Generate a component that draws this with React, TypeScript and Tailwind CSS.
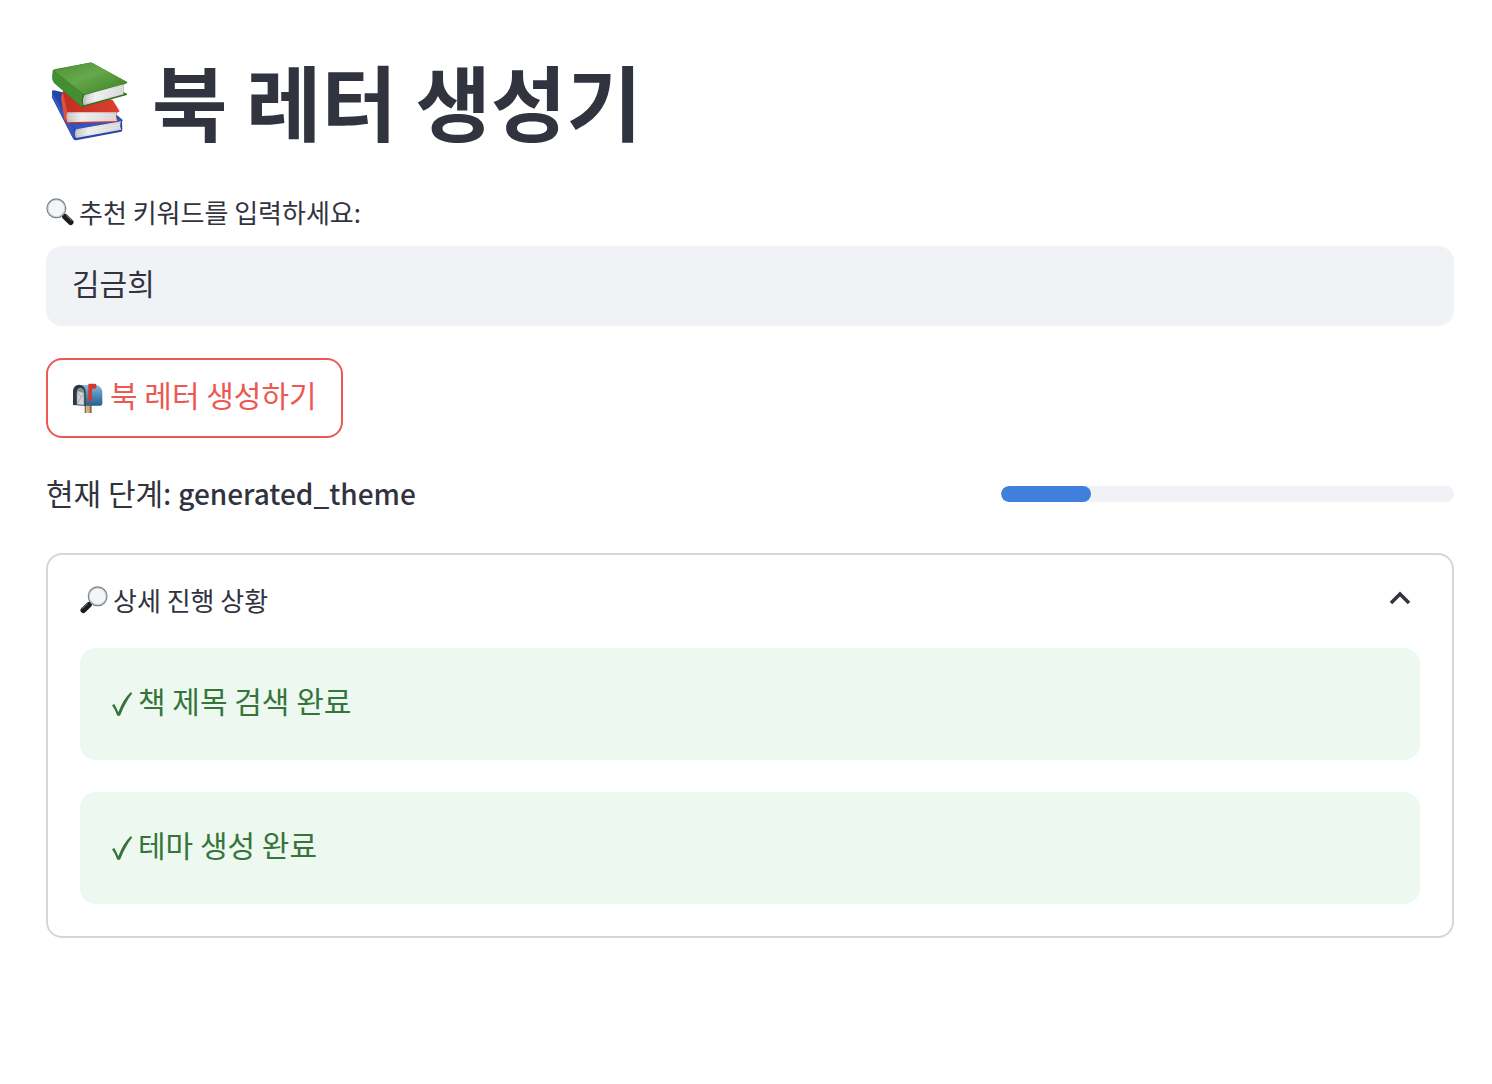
import React, { useState } from 'react'

interface IconProps {
  className?: string
}

interface StepProps {
  message: string
}

const STEPS = ['책 제목 검색 완료', '테마 생성 완료']

const BooksIcon = ({ className }: IconProps) => (
  <svg viewBox="18 18 264 264" className={className} aria-hidden="true">
    <defs>
      <linearGradient id="green" x1="0" y1="0" x2="1" y2="1">
        <stop offset="0" stopColor="#4f8f35" />
        <stop offset="0.45" stopColor="#66a84c" />
        <stop offset="1" stopColor="#37801f" />
      </linearGradient>
      <linearGradient id="red" x1="0" y1="0" x2="1" y2="0">
        <stop offset="0" stopColor="#c02e22" />
        <stop offset="1" stopColor="#dc4030" />
      </linearGradient>
      <linearGradient id="pages" x1="0" y1="0" x2="1" y2="0">
        <stop offset="0" stopColor="#bdbdbd" />
        <stop offset="0.3" stopColor="#ececec" />
        <stop offset="1" stopColor="#d3d3d3" />
      </linearGradient>
    </defs>
    <path d="M36 124 Q35 121 42 121 L68 127 L220 186 L248 210 L246 216 L247 240 L244 245 L108 271 Q101 271 98 263 L36 142 Z" fill="#2545a8" />
    <path d="M37 128 L100 235 L104 266 L98 263 L36 142 Z" fill="#3558bd" />
    <path d="M94 223 L236 203 L247 211 L106 238 Z" fill="#3355c0" />
    <path d="M108 238 L243 214 Q238 228 244 239 L108 264 Q101 252 108 238 Z" fill="url(#pages)" />
    <path d="M70 120 L82 118 L218 150 L239 184 L231 188 Q227 202 231 211 L236 216 L84 221 Q75 220 74 211 L65 150 Z" fill="url(#red)" />
    <path d="M68 124 L82 186 L76 214 L74 211 L63 145 Z" fill="#e0503e" />
    <path d="M82 187 L230 187 Q226 202 231 213 L82 217 Q76 200 82 187 Z" fill="url(#pages)" />
    <path d="M38 62 Q38 60 44 58 L148 38 Q153 37 157 39 L261 96 Q263 98 260 100 L250 104 L250 126 L261 131 Q262 134 258 136 L132 170 Q126 171 122 168 L42 98 Q37 92 37 84 Z" fill="#2d7421" />
    <path d="M40 61 L148 38 Q153 37 157 39 L261 96 Q262 98 259 100 L135 132 Q131 133 127 130 Z" fill="url(#green)" />
    <path d="M40 61 L128 131 Q123 148 127 169 L122 168 L42 98 Q37 92 37 80 Z" fill="#428e31" />
    <path d="M133 135 L250 103 Q248 118 251 133 L131 166 Q126 150 133 135 Z" fill="url(#pages)" />
    <path d="M140 141 L249 111 M137 149 L249 118 M136 156 L250 126" stroke="#fff" strokeOpacity="0.6" strokeWidth="2" fill="none" />
    <path d="M86 195 H228 M84 204 H228 M111 247 L240 223 M112 254 L240 231" stroke="#fff" strokeOpacity="0.55" strokeWidth="2" fill="none" />
  </svg>
)

const MagnifierIcon = ({ className }: IconProps) => (
  <svg viewBox="12 12 84 84" className={className} aria-hidden="true">
    <path d="M62 61 L70 69" stroke="#8a9299" strokeWidth="7" />
    <path d="M69 68 L86 85" stroke="#1c1d20" strokeWidth="17" strokeLinecap="round" />
    <path d="M73 65 L88 79" stroke="#74787d" strokeWidth="3" strokeLinecap="round" />
    <circle cx="43" cy="43" r="28" fill="#f4f5f6" stroke="#75808b" strokeWidth="4" />
    <circle cx="43" cy="43" r="25" fill="none" stroke="#c8ced4" strokeWidth="3" />
  </svg>
)

const MailboxIcon = ({ className }: IconProps) => (
  <svg viewBox="18 15 96 96" className={className} aria-hidden="true">
    <defs>
      <linearGradient id="box" x1="0" y1="0" x2="0" y2="1">
        <stop offset="0" stopColor="#8dbbdc" />
        <stop offset="0.4" stopColor="#5794bf" />
        <stop offset="1" stopColor="#285f8d" />
      </linearGradient>
    </defs>
    <path d="M56 80 H77 V108 H56 Z" fill="#8c6a42" />
    <path d="M60 84 H71 V108 H60 Z" fill="#d2b384" />
    <path d="M40 24 H91 Q109 28 109 48 V80 Q108 86 103 86 H56 Z" fill="url(#box)" />
    <path d="M21 84 V43 Q22 24 40 23 Q58 25 59 45 V86 H53 Z" fill="#2a3947" />
    <path d="M32 83 V48 Q33 32 43 32 Q55 33 55 48 V84 Z" fill="#8b8f92" />
    <path d="M34 43 L53 48 V83 L34 81 Z" fill="#d5d6d6" />
    <path d="M35 45 L46 61 L53 50 M35 79 L45 61" stroke="#96999b" strokeWidth="2" fill="none" />
    <path d="M67 22 Q67 20 70 20 H88 Q91 21 91 24 V32 Q90 35 87 35 H78 V68 Q77 74 72 74 Q67 74 67 68 Z" fill="#d6372b" />
  </svg>
)

const CheckMark = ({ className }: IconProps) => (
  <svg viewBox="0 0 66 78" className={className} aria-hidden="true">
    <path
      d="M0 43 L7 39 Q14 51 19 64 Q34 24 56 4 L61 7 Q40 34 24 74 L16 74 Q10 57 0 43 Z"
      fill="currentColor"
    />
  </svg>
)

const ChevronUp = ({ className }: IconProps) => (
  <svg viewBox="0 0 24 24" className={className} aria-hidden="true">
    <path d="M3 17 L12 8 L21 17" fill="none" stroke="currentColor" strokeWidth="3.4" />
  </svg>
)

const Step = ({ message }: StepProps) => (
  <div
    role="status"
    className="flex h-28 items-center gap-1 rounded-2xl bg-[#edf9f0] px-8 text-[30px] leading-[48px] text-[#36743a]"
  >
    <CheckMark className="h-[26px] w-[22px] shrink-0" />
    <span className="pb-2">{message}</span>
  </div>
)

const ProgressBar = ({ value }: { value: number }) => (
  <div
    role="progressbar"
    aria-label="진행률"
    aria-valuenow={value}
    className="h-4 overflow-hidden rounded-full bg-[#f0f2f6]"
  >
    <div className="h-full rounded-full bg-[#3f80dc]" style={{ width: `${value}%` }} />
  </div>
)

const App = () => {
  const [keyword, setKeyword] = useState('김금희')

  return (
    <main className="min-h-screen bg-white pt-12 pr-[38px] pb-12 pl-[46px] font-['Noto_Sans_CJK_KR',sans-serif] text-[#31333f]">
      <h1 className="flex items-center gap-[18px] text-[82px] leading-[104px] font-bold">
        <BooksIcon className="size-[88px] shrink-0" />
        <span>북 레터 생성기</span>
      </h1>

      <form className="pt-10" onSubmit={(e) => e.preventDefault()}>
        <label htmlFor="keyword" className="flex items-center gap-[5px] text-[26px] leading-10">
          <MagnifierIcon className="size-7 shrink-0" />
          <span>추천 키워드를 입력하세요:</span>
        </label>
        <input
          id="keyword"
          type="text"
          value={keyword}
          onChange={(e) => setKeyword(e.target.value)}
          className="mt-[14px] h-20 w-full rounded-2xl bg-[#f0f2f6] px-[26px] pb-2 text-[30px] focus:outline-none"
        />
        <button
          type="submit"
          className="mt-8 flex h-20 items-center gap-[6px] rounded-2xl border-2 border-[#ec5953] px-6 text-[30px] text-[#ec5953]"
        >
          <MailboxIcon className="size-8 shrink-0" />
          <span className="pb-2">북 레터 생성하기</span>
        </button>
      </form>

      <div className="grid grid-cols-[2fr_1fr] items-center gap-12 pt-8">
        <p className="pb-1 text-[30px] leading-[44px]">
          현재 단계: <span className="text-[28px] leading-none font-medium">generated_theme</span>
        </p>
        <ProgressBar value={20} />
      </div>

      <details open className="mt-[35px] rounded-2xl border-2 border-[#d5d6d8] px-8 pb-8">
        <summary className="flex h-[93px] cursor-pointer list-none items-center gap-[5px] pb-1 text-[26px]">
          <MagnifierIcon className="size-7 shrink-0 -scale-x-100" />
          <span>상세 진행 상황</span>
          <ChevronUp className="mr-2 mb-1 ml-auto size-6" />
        </summary>
        <div className="space-y-8">
          {STEPS.map((step) => (
            <Step key={step} message={step} />
          ))}
        </div>
      </details>
    </main>
  )
}

export default App
